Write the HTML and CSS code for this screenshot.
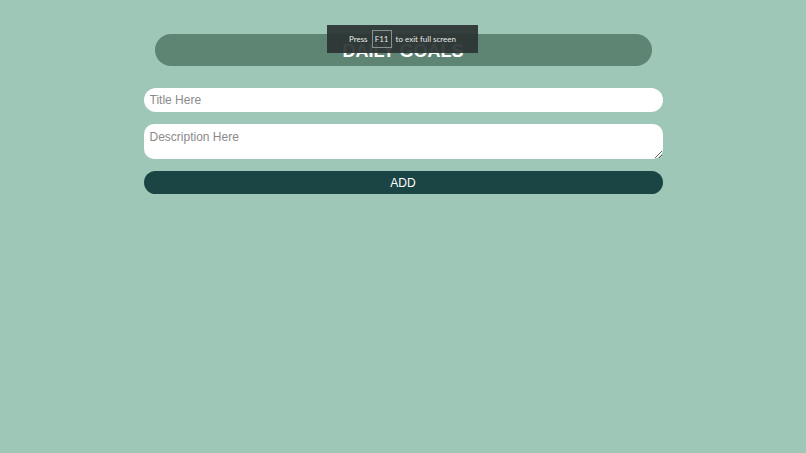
FILE: index.html
```html
<!DOCTYPE html>
<html lang="en">
<head>
    <meta charset="UTF-8">
    <title>Daily Goals</title>
    <link rel="stylesheet" href="styles.css">
</head>
<body>
  <div class="fs-notice">Press <span class="key">F11</span> to exit full screen</div>
  <div class="container">
    <h1>DAILY GOALS</h1>
    <input type="text" class="title-input" placeholder="Title Here">
    <textarea class="desc-input" placeholder="Description Here"></textarea>
    <button class="add-btn">ADD</button>
  </div>
</body>
</html>
```
FILE: styles.css
```css
body {
margin: 0;
background-color: #9ec7b7;
font-family: "Liberation Sans", Arial, sans-serif;
}

.container {
width: 519px;
margin: 0 auto;
padding-top: 34px;
display: flex;
flex-direction: column;
}

h1 {
margin: 0 11px 22px;
height: 32px;
line-height: 34px;
background-color: #5e8473;
border-radius: 16px;
color: white;
font-size: 18px;
text-align: center;
}

.title-input {
box-sizing: border-box;
height: 24px;
padding: 0 6px;
border: none;
border-radius: 12px;
font-family: inherit;
font-size: 12px;
background: white;
margin-bottom: 12px;
}

.desc-input {
box-sizing: border-box;
height: 35px;
padding: 6px 6px;
border: none;
border-radius: 10px;
font-family: inherit;
font-size: 12px;
background: white;
margin-bottom: 12px;
}

.title-input::placeholder,
.desc-input::placeholder {
color: #8a8a8a;
}

.add-btn {
height: 23px;
border: none;
border-radius: 12px;
background-color: #1b4444;
color: white;
font-family: inherit;
font-size: 12px;
cursor: pointer;
}

.fs-notice {
position: absolute;
left: 327px;
top: 25px;
width: 151px;
height: 28px;
background-color: rgba(44, 52, 52, 0.93);
color: #e8e8e8;
font-family: Lato, sans-serif;
font-size: 8px;
display: flex;
align-items: center;
justify-content: center;
gap: 4px;
}

.fs-notice .key {
box-sizing: border-box;
width: 20px;
height: 18px;
line-height: 16px;
text-align: center;
border: 1px solid #8a9090;
}
```
